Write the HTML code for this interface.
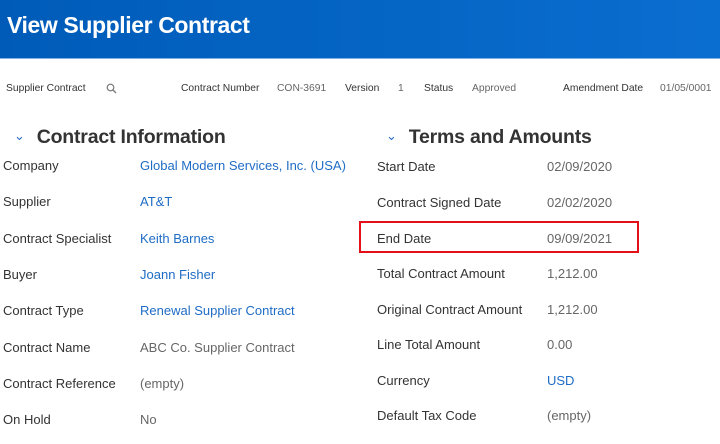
<!DOCTYPE html>
<html><head><style>
body{margin:0;width:720px;height:444px;overflow:hidden;background:#fff;font-family:"Liberation Sans",sans-serif;position:relative}
.hdr{position:absolute;left:0;top:0;width:720px;height:58px;background:linear-gradient(90deg,#005bb8,#0a6ed0);border-bottom:1px solid #7fb0e6}
.hdr div{position:absolute;left:7px;top:12px;color:#fff;font-size:23px;font-weight:bold;letter-spacing:-0.4px}
.t{position:absolute;white-space:nowrap;font-size:13px;color:#333}
.s{font-size:10.3px;color:#333}
.g{color:#666}
.b{color:#1f6cc5}
.h{position:absolute;font-size:19.5px;font-weight:bold;color:#333;white-space:nowrap;letter-spacing:-0.2px}
.h span{color:#2b6fc4;font-size:13px;font-weight:normal;margin-right:12px;position:relative;top:-3px}
.red{position:absolute;left:359px;top:221px;width:276px;height:28px;border:2px solid #e3101a}
</style></head><body>
<div class="hdr"><div>View Supplier Contract</div></div>
<div class="t s" style="left:6px;top:83px">Supplier Contract</div>
<svg style="position:absolute;left:106px;top:83px" width="11" height="11" viewBox="0 0 11 11"><circle cx="4.5" cy="4.5" r="3.3" fill="none" stroke="#777" stroke-width="1.2"/><path d="M7 7l3 3" stroke="#777" stroke-width="1.3"/></svg>
<div class="t s" style="left:181px;top:83px">Contract Number</div>
<div class="t s g" style="left:277px;top:83px">CON-3691</div>
<div class="t s" style="left:345px;top:83px">Version</div>
<div class="t s g" style="left:398px;top:83px">1</div>
<div class="t s" style="left:424px;top:83px">Status</div>
<div class="t s g" style="left:472px;top:83px">Approved</div>
<div class="t s" style="left:563px;top:83px">Amendment Date</div>
<div class="t s g" style="left:660px;top:83px">01/05/0001</div>
<div class="h" style="left:14px;top:126px"><span>&#8964;</span>Contract Information</div>
<div class="h" style="left:386px;top:126px"><span>&#8964;</span>Terms and Amounts</div>

<div class="t" style="left:3px;top:158px">Company</div><div class="t b" style="left:140px;top:158px">Global Modern Services, Inc. (USA)</div>
<div class="t" style="left:3px;top:194px">Supplier</div><div class="t b" style="left:140px;top:194px">AT&amp;T</div>
<div class="t" style="left:3px;top:231px">Contract Specialist</div><div class="t b" style="left:140px;top:231px">Keith Barnes</div>
<div class="t" style="left:3px;top:267px">Buyer</div><div class="t b" style="left:140px;top:267px">Joann Fisher</div>
<div class="t" style="left:3px;top:303px">Contract Type</div><div class="t b" style="left:140px;top:303px">Renewal Supplier Contract</div>
<div class="t" style="left:3px;top:340px">Contract Name</div><div class="t g" style="left:140px;top:340px">ABC Co. Supplier Contract</div>
<div class="t" style="left:3px;top:376px">Contract Reference</div><div class="t g" style="left:140px;top:376px">(empty)</div>
<div class="t" style="left:3px;top:412px">On Hold</div><div class="t g" style="left:140px;top:412px">No</div>

<div class="t" style="left:377px;top:159px">Start Date</div><div class="t g" style="left:547px;top:159px">02/09/2020</div>
<div class="t" style="left:377px;top:195px">Contract Signed Date</div><div class="t g" style="left:547px;top:195px">02/02/2020</div>
<div class="t" style="left:377px;top:231px">End Date</div><div class="t g" style="left:547px;top:231px">09/09/2021</div>
<div class="t" style="left:377px;top:266px">Total Contract Amount</div><div class="t g" style="left:547px;top:266px">1,212.00</div>
<div class="t" style="left:377px;top:302px">Original Contract Amount</div><div class="t g" style="left:547px;top:302px">1,212.00</div>
<div class="t" style="left:377px;top:337px">Line Total Amount</div><div class="t g" style="left:547px;top:337px">0.00</div>
<div class="t" style="left:377px;top:373px">Currency</div><div class="t b" style="left:547px;top:373px">USD</div>
<div class="t" style="left:377px;top:408px">Default Tax Code</div><div class="t g" style="left:547px;top:408px">(empty)</div>
<div class="red"></div>
</body></html>
